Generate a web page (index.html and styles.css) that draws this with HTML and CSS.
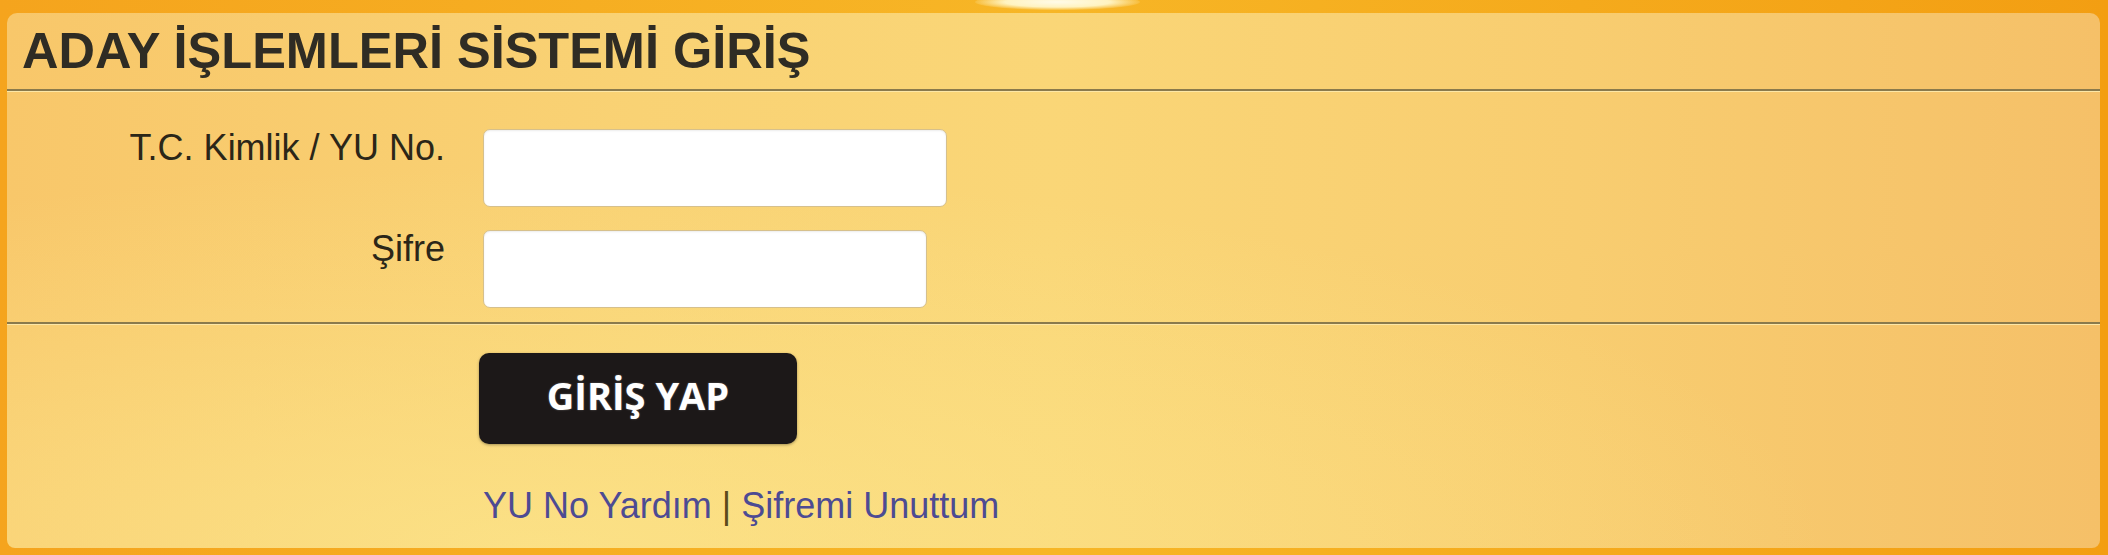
FILE: index.html
```html
<!DOCTYPE html>
<html lang="tr">
<head>
    <meta charset="UTF-8">
    <meta name="viewport" content="width=device-width, initial-scale=1.0">
    <title>Aday İşlemleri Sistemi Giriş</title>
    <link rel="stylesheet" href="styles.css">
</head>
<body>
    <div class="frame">
        <div class="glow"></div>
        <div class="panel">
            <h1 class="panel-title">ADAY İŞLEMLERİ SİSTEMİ GİRİŞ</h1>

            <form id="loginForm" class="login-fields">
                <label for="tcNo">T.C. Kimlik / YU No.</label>
                <input type="text" id="tcNo" name="tcNo" class="field-wide">

                <label for="sifre">Şifre</label>
                <input type="password" id="sifre" name="sifre" class="field-narrow">
            </form>

            <div class="login-actions">
                <button type="submit" form="loginForm" class="btn-login">GİRİŞ YAP</button>
                <p class="help-links">
                    <a href="#">YU No Yardım</a> <span class="sep">|</span> <a href="#">Şifremi Unuttum</a>
                </p>
            </div>
        </div>
    </div>
</body>
</html>
```

FILE: styles.css
```css
html, body {
    margin: 0;
    height: 100%;
}
body {
    font-family: "Liberation Sans", Arial, sans-serif;
    background: linear-gradient(to right, #f5a41d, #f7b626 50%, #f39e12);
}
.frame {
    position: relative;
    height: 555px;
    box-sizing: border-box;
    padding: 13px 8px 7px 7px;
}
.glow {
    position: absolute;
    top: -6px;
    left: 975px;
    width: 165px;
    height: 16px;
    border-radius: 50%;
    background: radial-gradient(ellipse at center, #fffbe8 0%, #fff3c0 45%, rgba(255, 230, 140, 0) 75%);
}
.panel {
    height: 100%;
    box-sizing: border-box;
    border-radius: 10px 10px 8px 8px;
    background:
        radial-gradient(ellipse 1300px 380px at 25% 100%, rgba(252, 230, 140, 0.75), rgba(252, 230, 140, 0) 100%),
        linear-gradient(to right, #f8c76a 0%, #f9d274 30%, #fad677 50%, #f8cd70 75%, #f5c068 100%);
}
.panel-title {
    margin: 0;
    padding-left: 15px;
    height: 76px;
    line-height: 76px;
    font-size: 50.5px;
    font-weight: bold;
    color: #2f2c24;
    border-bottom: 2px solid #8a7a4c;
    box-shadow: 0 1px 0 #fde7a6;
}
.login-fields {
    display: grid;
    grid-template-columns: 438px auto;
    column-gap: 38px;
    row-gap: 23px;
    align-items: start;
    padding: 38px 0 14px;
    border-bottom: 2px solid #8a7a4c;
    box-shadow: 0 1px 0 #fde7a6;
}
.login-fields label {
    text-align: right;
    font-size: 36px;
    line-height: 38px;
    color: #2b2618;
}
.login-fields input {
    height: 78px;
    box-sizing: border-box;
    border: 1px solid #d6c08c;
    border-radius: 7px;
    background: #fff;
    box-shadow: inset 0 1px 2px rgba(0, 0, 0, 0.08);
    font-size: 30px;
    padding: 0 14px;
}
.field-wide {
    width: 464px;
}
.field-narrow {
    width: 444px;
}
.login-actions {
    padding: 29px 0 0 472px;
}
.btn-login {
    display: block;
    width: 318px;
    height: 91px;
    padding: 0 0 6px;
    border: none;
    border-radius: 10px;
    background: #1c1818;
    box-shadow: 0 1px 3px rgba(0, 0, 0, 0.35);
    color: #fff;
    font-family: "Open Sans", "Liberation Sans", sans-serif;
    font-size: 38px;
    font-weight: bold;
    line-height: 85px;
    text-shadow: 0 0 2px rgba(255, 255, 255, 0.35);
}
.help-links {
    margin: 42px 0 0 4px;
    font-size: 36px;
    line-height: 40px;
}
.help-links a {
    color: #4d4b93;
    text-decoration: none;
}
.help-links .sep {
    color: #5b4a1c;
}
```
